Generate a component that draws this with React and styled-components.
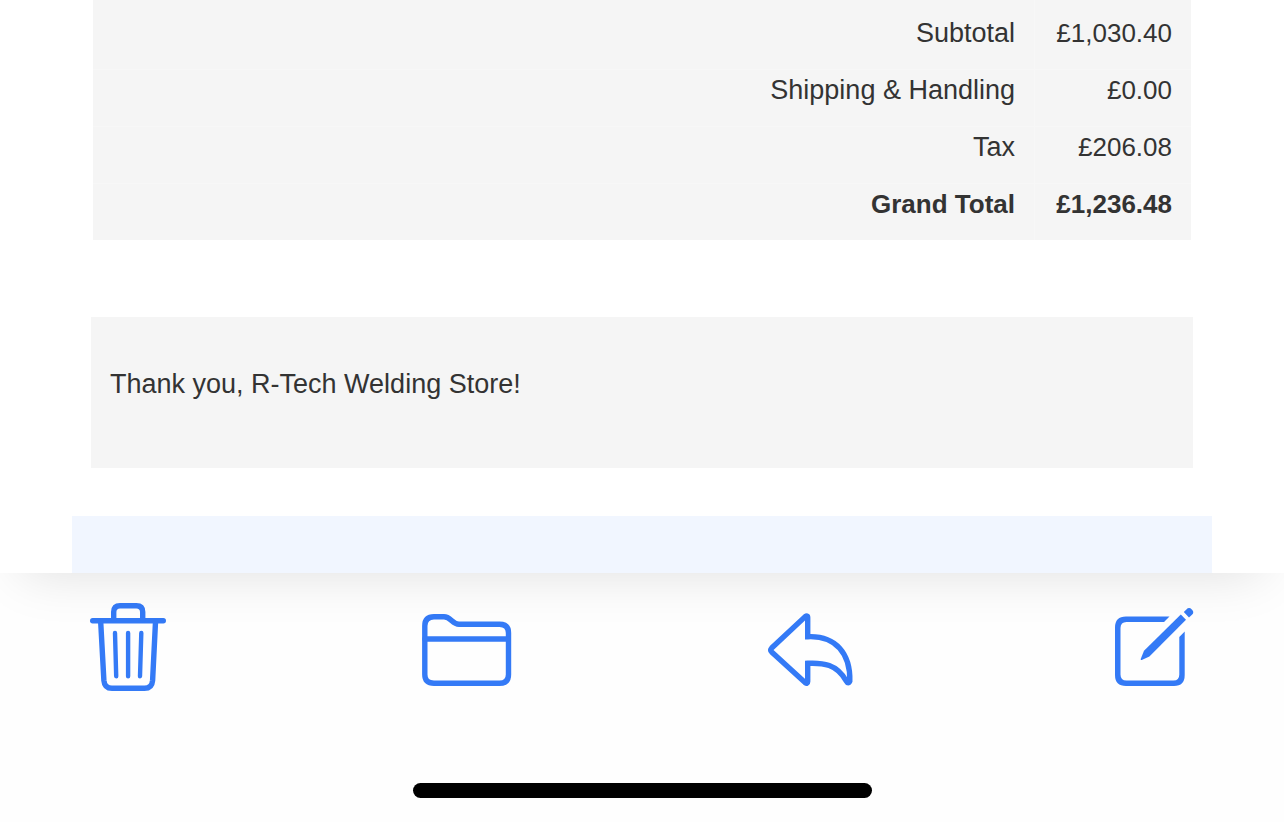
import React from "react";
import styled, { createGlobalStyle } from "styled-components";

const GlobalStyle = createGlobalStyle`
    * {
        box-sizing: border-box;
    }
    body {
        margin: 0;
        background: #fefefe;
        color: #333;
        font-family: "Liberation Sans", Arial, sans-serif;
        font-size: 27px;
        line-height: 36px;
    }
`;

const Screen = styled.div`
    min-height: 100vh;
    display: flex;
    flex-direction: column;
`;

// message sheet, its shadow falls on the toolbar below
const Message = styled.main`
    position: relative;
    z-index: 1;
    padding: 0 72px;
    background: #fff;
    box-shadow: 0 22px 50px -22px rgba(0, 0, 0, 0.13);
`;

const TotalsWrapper = styled.section`
    padding: 0 21px;
`;

const Totals = styled.table`
    width: 100%;
    border-collapse: collapse;
    background: #f5f5f5;
`;

const TotalsRow = styled.tr`
    font-weight: ${props => (props.$bold ? 700 : 400)};

    &:first-child > * {
        padding-top: 15px;
    }
    & + & {
        background: linear-gradient(#f7f7f7, #f7f7f7) top / 100% 1px no-repeat;
    }
`;

const Label = styled.th`
    padding: 3px 19px 18px;
    text-align: right;
    font-weight: inherit;
    font-size: ${props => (props.$bold ? "26px" : "27px")};
`;

const Amount = styled.td`
    width: 157px;
    padding: 3px 19px 18px;
    text-align: right;
    white-space: nowrap;
    font-size: 26px;
    box-shadow: inset 1px 0 #f7f7f7;
`;

const ThankYou = styled.section`
    margin: 77px 19px 48px;
    padding: 49px 19px 66px;
    background: #f5f5f5;
`;

const Text = styled.p`
    margin: 0;
`;

const Banner = styled.div`
    height: 57px;
    background: #f1f6ff;
`;

const Toolbar = styled.nav`
    display: flex;
    justify-content: space-between;
    padding: 25px 80px 0 78px;
`;

const IconButton = styled.button`
    width: 100px;
    height: 100px;
    padding: 0;
    border: none;
    background: none;
    color: #347af6;
    cursor: pointer;
`;

const Icon = styled.svg`
    display: block;
    width: 100%;
    height: 100%;
    fill: none;
    stroke: currentColor;
    stroke-linecap: round;
    stroke-linejoin: round;
`;

const HomeIndicator = styled.div`
    width: 459px;
    max-width: 60%;
    height: 15px;
    margin: 85px auto 24px;
    border-radius: 8px;
    background: #000;
`;

const TrashIcon = () => (
    <Icon viewBox="0 0 100 100" strokeWidth="5.4" aria-hidden="true">
        <path d="M14.7 22.8H85.3" />
        <path d="M35.7 22V14Q35.7 7.7 42 7.7H58.4Q64.7 7.7 64.7 14V22" />
        <path d="M22.7 24L25.9 82.5Q26.5 90.3 34 90.3H66.5Q74 90.3 74.6 82.5L77.5 24" />
        <path
            strokeWidth="4.4"
            d="M37 35L38.2 78.3M50.1 35V78.3M63.3 35L62 78.3"
        />
    </Icon>
);

const FolderIcon = () => (
    <Icon viewBox="0 0 100 100" strokeWidth="5.4" aria-hidden="true">
        <path d="M4.8 28Q4.8 18.8 14 18.8H24C31 18.8 32 26.2 39 26.2H79.5Q88.5 26.2 88.5 35V76.5Q88.5 85.2 79.5 85.2H14Q4.8 85.2 4.8 76.5Z" />
        <path d="M5 41H88" />
    </Icon>
);

const ReplyIcon = () => (
    <Icon viewBox="0 0 100 100" strokeWidth="5.4" aria-hidden="true">
        <path
            strokeLinejoin="miter"
            d="M45.7 19.5Q45.7 17 43 18.8L9.7 50Q7.8 52 9.7 54L43 84.5Q45.7 86.5 45.7 83.5V65.3C61 64.6 75 66 84.4 83.2Q86.2 86.6 87.8 83.2C88.6 56 74 37.3 45.7 38.7Z"
        />
    </Icon>
);

const ComposeIcon = () => (
    <Icon viewBox="0 0 100 100" aria-hidden="true">
        <g fill="currentColor" stroke="none">
            <path d="M65.5 18.6H22Q11 18.6 11 29.5V77Q11 88 22 88H70Q80.7 88 80.7 77V33.6L75.3 39V76.5Q75.3 82.6 69.5 82.6H22.5Q16.5 82.6 16.5 76.5V30Q16.5 24 22.5 24H60Z" />
            <path d="M36.8 60.8L40 52.8L76.8 16.6L82 21.8L45.4 58.6L37.8 62Q36.3 62.4 36.8 60.8Z" />
            <path d="M79.8 14L82.4 11.4Q85 8.8 87.8 11.4Q90.5 14 88.2 16.6L85 19.4Z" />
        </g>
    </Icon>
);

const totals = [
    { label: "Subtotal", amount: "£1,030.40" },
    { label: "Shipping & Handling", amount: "£0.00" },
    { label: "Tax", amount: "£206.08" },
    { label: "Grand Total", amount: "£1,236.48", bold: true },
];

const actions = [
    { label: "Delete", ActionIcon: TrashIcon },
    { label: "Move to folder", ActionIcon: FolderIcon },
    { label: "Reply", ActionIcon: ReplyIcon },
    { label: "Compose", ActionIcon: ComposeIcon },
];

const App = () => (
    <Screen>
        <GlobalStyle />
        <Message>
            <TotalsWrapper>
                <Totals>
                    <tbody>
                        {totals.map(({ label, amount, bold }) => (
                            <TotalsRow key={label} $bold={bold}>
                                <Label scope="row" $bold={bold}>
                                    {label}
                                </Label>
                                <Amount>{amount}</Amount>
                            </TotalsRow>
                        ))}
                    </tbody>
                </Totals>
            </TotalsWrapper>
            <ThankYou>
                <Text>Thank you, R-Tech Welding Store!</Text>
            </ThankYou>
            <Banner />
        </Message>
        <Toolbar aria-label="Message actions">
            {actions.map(({ label, ActionIcon }) => (
                <IconButton key={label} type="button" aria-label={label}>
                    <ActionIcon />
                </IconButton>
            ))}
        </Toolbar>
        <HomeIndicator />
    </Screen>
);

export default App;
